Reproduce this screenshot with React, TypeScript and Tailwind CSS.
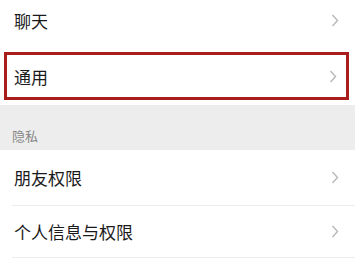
import React from "react";

const Chevron: React.FC = () => (
  <svg width="8" height="13" viewBox="0 0 8 13" fill="none" className="shrink-0">
    <polyline points="1.5,1 6.5,6.5 1.5,12" stroke="#b8b8b8" strokeWidth="1.4" />
  </svg>
);

const Row: React.FC<{ label: string; className?: string }> = ({ label, className }) => (
  <div className={`flex items-center justify-between ${className ?? ""}`}>
    <span className="text-[17px] text-[#1a1a1a] leading-none">{label}</span>
    <Chevron />
  </div>
);

export default function App() {
  return (
    <div
      className="w-[355px] h-[262px] overflow-hidden bg-white"
      style={{ fontFamily: '"Noto Sans CJK SC", "Noto Sans", sans-serif' }}
    >
      <Row label="聊天" className="h-[41px] pl-[14px] pr-[16px]" />
      <div className="h-[11px]" />
      <div className="mx-[4px] w-[345px] h-[48px] border-[3px] border-[#a91d1d] flex items-center justify-between pl-[7px] pr-[9px]">
        <span className="text-[17px] text-[#1a1a1a] leading-none">通用</span>
        <Chevron />
      </div>
      <div className="h-[5px]" />
      <div className="h-[45px] bg-[#ededed] flex items-end pl-[12px] pb-[8px]">
        <span className="text-[13px] text-[#888888] leading-none">隐私</span>
      </div>
      <Row label="朋友权限" className="h-[55px] pl-[14px] pr-[16px]" />
      <div className="ml-[12px] h-px bg-[#ececec]" />
      <Row label="个人信息与权限" className="h-[51px] pl-[14px] pr-[16px]" />
      <div className="ml-[12px] h-px bg-[#ececec]" />
    </div>
  );
}
